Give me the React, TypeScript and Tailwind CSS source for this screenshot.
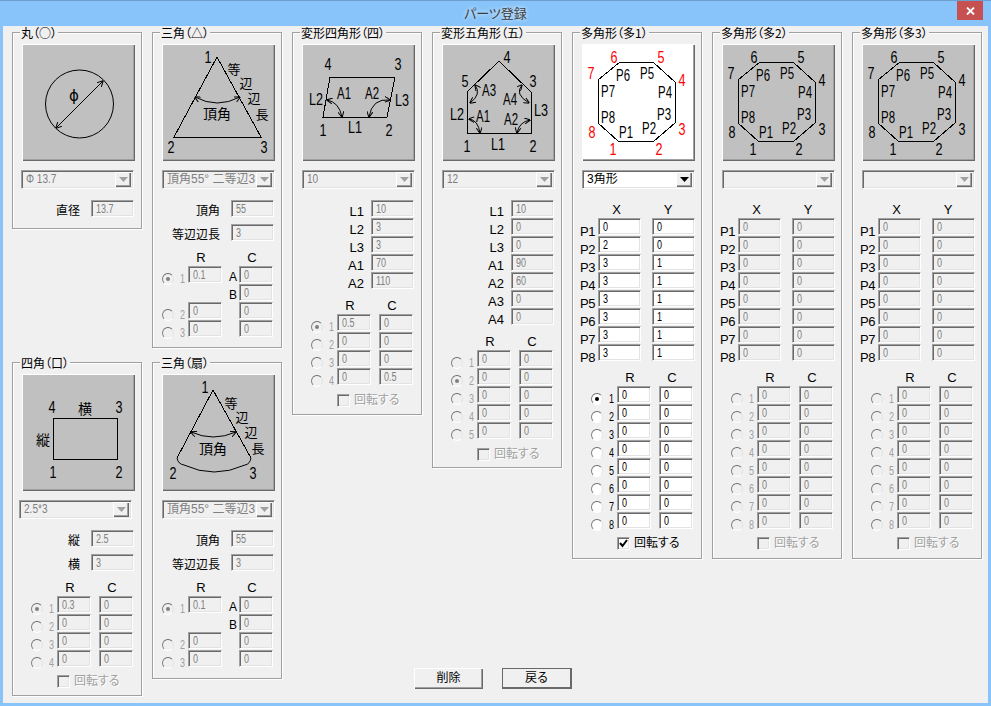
import React from 'react';

const raised = 'shadow-[inset_1px_1px_0_#ffffff,inset_-1px_-1px_0_#696969,inset_-2px_-2px_0_#a0a0a0]';
const sunken =
  'border border-t-[#a0a0a0] border-l-[#a0a0a0] border-r-white border-b-white shadow-[inset_1px_1px_0_#696969,inset_-1px_-1px_0_#e3e3e3]';

// legacy dialog font has very narrow digits, so latin text is squeezed
function Narrow({ children }: { children: React.ReactNode }) {
  return <span className="inline-block origin-left scale-x-[0.75] whitespace-nowrap">{children}</span>;
}

function Field({ v, on, small }: { v: string; on?: boolean; small?: boolean }) {
  return (
    <div
      className={`h-[17px] shrink-0 overflow-hidden pl-[4px] pt-[2px] text-[12px] leading-[13px] ${sunken} ${
        small ? 'w-[34px]' : 'w-[43px]'
      } ${on ? 'bg-white text-black' : 'bg-[#f0f0f0] text-[#808080]'}`}
    >
      <Narrow>{v}</Narrow>
    </div>
  );
}

function Group({ title, className, children }: { title: string; className: string; children: React.ReactNode }) {
  return (
    <div
      className={`relative w-[130px] border border-[#a0a0a0] shadow-[1px_1px_0_#ffffff,inset_1px_1px_0_#ffffff] ${className}`}
    >
      <div className="absolute left-[7px] top-[-7px] whitespace-nowrap bg-[#f0f0f0] px-[1px] text-[12px] leading-[13px] text-black [font-family:'Noto_Sans_CJK_JP',sans-serif]">
        {title}
      </div>
      {children}
    </div>
  );
}

function ImageButton({ white, children }: { white?: boolean; children: React.ReactNode }) {
  return (
    <div className={`ml-[9px] mt-[11px] h-[117px] w-[113px] ${raised} ${white ? 'bg-white' : 'bg-[#c0c0c0]'}`}>
      <svg width="113" height="117" viewBox="0 0 113 117" fill="none" stroke="#000" strokeWidth="1">
        <defs>
          <marker id="arr" viewBox="0 0 6 6" refX="5.5" refY="3" markerWidth="6" markerHeight="6" orient="auto-start-reverse" markerUnits="userSpaceOnUse">
            <path d="M0 0 L6 3 L0 6" fill="none" stroke="#000" strokeWidth="1" />
          </marker>
        </defs>
        {children}
      </svg>
    </div>
  );
}

function Num({ x, y, t, c = '#000' }: { x: number; y: number; t: string; c?: string }) {
  return (
    <text
      x={x}
      y={y}
      textAnchor="middle"
      dominantBaseline="central"
      fontFamily="'Liberation Sans', sans-serif"
      fontSize="16"
      fill={c}
      stroke="none"
      textLength={t.length * 7}
      lengthAdjust="spacingAndGlyphs"
    >
      {t}
    </text>
  );
}

function Kan({ x, y, t, size = 14 }: { x: number; y: number; t: string; size?: number }) {
  return (
    <text
      x={x}
      y={y}
      textAnchor="middle"
      dominantBaseline="central"
      fontFamily="'Noto Sans CJK JP', sans-serif"
      fontSize={size}
      fill="#000"
      stroke="none"
    >
      {t}
    </text>
  );
}

function Combo({ v, on, narrow, className }: { v?: string; on?: boolean; narrow?: boolean; className: string }) {
  return (
    <div
      className={`mt-[9px] flex h-[19px] w-[113px] items-center justify-between pl-[4px] pr-[2px] text-[12px] leading-[13px] ${sunken} ${className} ${
        on ? 'bg-white text-black' : 'bg-[#f0f0f0] text-[#808080]'
      }`}
    >
      {narrow ? (
        <span className="inline-block origin-left scale-x-[0.84] whitespace-nowrap">{v}</span>
      ) : (
        <span className="overflow-hidden whitespace-nowrap">{v}</span>
      )}
      <div className={`flex h-[15px] w-[16px] shrink-0 items-center justify-center bg-[#f0f0f0] ${raised}`}>
        <svg width="9" height="5" viewBox="0 0 9 5">
          <path d="M0 0 H9 L4.5 5 Z" fill={on ? '#000' : '#a0a0a0'} />
        </svg>
      </div>
    </div>
  );
}

function Param({ label, v, gap, on }: { label: string; v: string; gap?: boolean; on?: boolean }) {
  return (
    <div className={`flex h-[18px] items-start justify-end pr-[7px] ${gap ? 'mb-[6px]' : ''}`}>
      <span className={`mt-[3px] leading-[17px] text-black ${gap ? 'mr-[11px] text-[12px]' : 'mr-[7px] text-[13px]'}`}>
        {label}
      </span>
      <Field v={v} on={on} />
    </div>
  );
}

function Head({ tri }: { tri?: boolean }) {
  return (
    <div className={`mt-[7px] flex h-[17px] text-[13px] leading-[17px] text-black ${tri ? 'ml-[35px]' : 'ml-[44px]'}`}>
      <span className="w-[26px] text-center">R</span>
      <span className={`w-[26px] text-center ${tri ? 'ml-[25px]' : 'ml-[16px]'}`}>C</span>
    </div>
  );
}

function Radio({ checked, on }: { checked?: boolean; on?: boolean }) {
  return (
    <div
      className={`mt-[7px] flex h-[12px] w-[12px] shrink-0 items-center justify-center rounded-full border border-t-[#696969] border-l-[#808080] border-r-[#e3e3e3] border-b-white ${
        on ? 'bg-white' : 'bg-[#f0f0f0]'
      }`}
    >
      {checked && <div className={`h-[4px] w-[4px] rounded-full ${on ? 'bg-black' : 'bg-[#808080]'}`} />}
    </div>
  );
}

type RC = { r: string; c: string; n: string; abc?: string };

function RadioRows({ rows, sel, on, tri }: { rows: RC[]; sel: number; on?: boolean; tri?: boolean }) {
  return (
    <div>
      {rows.map((row, i) => (
        <div key={i} className={`flex h-[18px] items-start ${tri ? 'ml-[9px]' : 'ml-[18px]'}`}>
          {row.n ? <Radio checked={sel === i} on={on} /> : <div className="w-[12px] shrink-0" />}
          <span
            className={`mt-[7px] w-[14px] shrink-0 pl-[6px] text-[12px] leading-[13px] ${
              on ? 'text-black' : 'text-[#a0a0a0]'
            }`}
          >
            <Narrow>{row.n}</Narrow>
          </span>
          {row.r === '' ? <div className="w-[34px] shrink-0" /> : <Field v={row.r} on={on} small />}
          <span className={`mt-[4px] shrink-0 pr-[2px] text-right text-[12px] leading-[15px] text-black ${tri ? 'w-[17px]' : 'w-[8px]'}`}>
            {row.abc}
          </span>
          <Field v={row.c} on={on} small />
        </div>
      ))}
    </div>
  );
}

function Check({ on, className }: { on?: boolean; className: string }) {
  return (
    <div className={`ml-[44px] flex items-center ${className}`}>
      <div className={`flex h-[13px] w-[13px] shrink-0 items-center justify-center ${sunken} ${on ? 'bg-white' : 'bg-[#f0f0f0]'}`}>
        {on && (
          <svg width="9" height="9" viewBox="0 0 9 9">
            <path d="M1 4 L3.5 7 L8 1" fill="none" stroke="#000" strokeWidth="2" />
          </svg>
        )}
      </div>
      <span
        className={`ml-[4px] text-[12px] leading-[13px] ${on ? 'text-black' : 'text-[#a0a0a0] [text-shadow:1px_1px_0_#ffffff]'}`}
      >
        回転する
      </span>
    </div>
  );
}

function Octagon({ red }: { red?: boolean }) {
  const c = red ? '#ff0000' : '#000';
  return (
    <ImageButton white={red}>
      <path shapeRendering="crispEdges" d="M38 18 H71 L93 38 V79 L72 97 H36 L16 79 V36 Z" />
      <Num x={32} y={13} t="6" c={c} />
      <Num x={79} y={13} t="5" c={c} />
      <Num x={9} y={29} t="7" c={c} />
      <Num x={100} y={36} t="4" c={c} />
      <Num x={10} y={88} t="8" c={c} />
      <Num x={100} y={85} t="3" c={c} />
      <Num x={31} y={105} t="1" c={c} />
      <Num x={77} y={105} t="2" c={c} />
      <Num x={41} y={31} t="P6" />
      <Num x={65} y={29} t="P5" />
      <Num x={26} y={47} t="P7" />
      <Num x={83} y={48} t="P4" />
      <Num x={26} y={73} t="P8" />
      <Num x={82} y={70} t="P3" />
      <Num x={44} y={88} t="P1" />
      <Num x={67} y={84} t="P2" />
    </ImageButton>
  );
}

function PolyGroup({ title, on }: { title: string; on?: boolean }) {
  const xy = on
    ? [['0', '0'], ['2', '0'], ['3', '1'], ['3', '1'], ['3', '1'], ['3', '1'], ['3', '1'], ['3', '1']]
    : Array.from({ length: 8 }, () => ['0', '0']);
  const rows: RC[] = ['1', '2', '3', '4', '5', '6', '7', '8'].map((n) => ({ n, r: '0', c: '0' }));
  return (
    <Group title={title} className="h-[527px]">
      <Octagon red={on} />
      <Combo on={on} v={on ? '3角形' : ''} className="ml-[9px]" />
      <div className="ml-[25px] mt-[12px] flex h-[17px] text-[13px] leading-[17px] text-black">
        <span className="w-[37px] text-center">X</span>
        <span className="ml-[16px] w-[34px] text-center">Y</span>
      </div>
      {xy.map(([x, y], i) => (
        <div key={i} className="ml-[7px] flex h-[18px] items-start">
          <span className="mt-[5px] w-[18px] shrink-0 text-[13px] leading-[17px] tracking-[-0.5px] text-black">P{i + 1}</span>
          <Field v={x} on={on} />
          <div className="w-[11px] shrink-0" />
          <Field v={y} on={on} />
        </div>
      ))}
      <Head />
      <RadioRows rows={rows} sel={on ? 0 : -1} on={on} />
      <Check on={on} className="mt-[7px]" />
    </Group>
  );
}

const fanRows: RC[] = [
  { n: '1', r: '0.1', c: '0', abc: 'A' },
  { n: '', r: '', c: '0', abc: 'B' },
  { n: '2', r: '0', c: '0' },
  { n: '3', r: '0', c: '0' },
];

export default function App() {
  return (
    <div
      className="flex h-[706px] w-[991px] flex-col overflow-hidden bg-[#88c4f9] [font-family:'Liberation_Sans','Noto_Sans_CJK_JP',sans-serif] [font-feature-settings:'palt']"
    >
      {/* Title bar */}
      <div className="relative flex h-[26px] shrink-0 items-center justify-center border-t border-[#6a9fd0]">
        <span className="text-[13px] leading-[16px] text-[#3c3c3c] [text-shadow:0_0_4px_#ffffff]">パーツ登録</span>
        <div className="absolute right-[8px] top-0 flex h-[19px] w-[26px] items-center justify-center bg-[#c75050]">
          <svg width="9" height="8" viewBox="0 0 9 8">
            <path d="M1 0.5 L8 7.5 M8 0.5 L1 7.5" stroke="#fff" strokeWidth="1.8" />
          </svg>
        </div>
      </div>

      {/* Client area */}
      <div className="mx-[3px] mb-[3px] flex min-h-0 flex-1 gap-[10px] bg-[#f0f0f0] pl-[9px] pt-[6px]">
        {/* Column 1 */}
        <div className="flex w-[130px] flex-col">
          <Group title="丸（○）" className="h-[197px]">
            <ImageButton>
              <circle cx="57.5" cy="60" r="34" />
              <path shapeRendering="crispEdges" d="M34 84 L81 37" markerStart="url(#arr)" markerEnd="url(#arr)" />
              <text x="52" y="52" textAnchor="middle" dominantBaseline="central" fontFamily="'DejaVu Sans', sans-serif" fontSize="15" fill="#000" stroke="none">
                ϕ
              </text>
            </ImageButton>
            <Combo v="Φ 13.7" narrow className="ml-[8px]" />
            <div className="mt-[11px]">
              <Param label="直径" v="13.7" gap />
            </div>
          </Group>
          <div className="mt-[133px]">
            <Group title="四角（口）" className="h-[334px]">
              <ImageButton>
                <rect x="31.5" y="44.5" width="64" height="41" shapeRendering="crispEdges" strokeWidth="1" />
                <Num x={30} y={33} t="4" />
                <Num x={97} y={33} t="3" />
                <Num x={31} y={98} t="1" />
                <Num x={97} y={98} t="2" />
                <Kan x={63} y={34} t="横" />
                <Kan x={21} y={65} t="縦" />
              </ImageButton>
              <Combo v="2.5*3" narrow className="ml-[6px]" />
              <div className="mt-[11px]">
                <Param label="縦" v="2.5" gap />
                <Param label="横" v="3" gap />
              </div>
              <Head />
              <RadioRows
                sel={0}
                rows={[
                  { n: '1', r: '0.3', c: '0' },
                  { n: '2', r: '0', c: '0' },
                  { n: '3', r: '0', c: '0' },
                  { n: '4', r: '0', c: '0' },
                ]}
              />
              <Check className="mt-[7px]" />
            </Group>
          </div>
        </div>

        {/* Column 2 */}
        <div className="flex w-[130px] flex-col">
          <Group title="三角（△）" className="h-[316px]">
            <ImageButton>
              <path shapeRendering="crispEdges" d="M55 13 L12 93 H99 Z" />
              <path d="M33 53 Q55 65 78 53" markerStart="url(#arr)" markerEnd="url(#arr)" />
              <Num x={46} y={13} t="1" />
              <Num x={9} y={103} t="2" />
              <Num x={102} y={103} t="3" />
              <Kan x={72} y={24} t="等" size={13} />
              <Kan x={84} y={38} t="辺" size={13} />
              <Kan x={92} y={53} t="辺" size={13} />
              <Kan x={100} y={69} t="長" size={13} />
              <Kan x={55} y={69} t="頂角" />
            </ImageButton>
            <Combo v="頂角55° 二等辺3" className="ml-[9px]" />
            <div className="mt-[11px]">
              <Param label="頂角" v="55" gap />
              <Param label="等辺辺長" v="3" gap />
            </div>
            <Head tri />
            <RadioRows rows={fanRows} sel={0} tri />
          </Group>
          <div className="mt-[14px]">
            <Group title="三角（扇）" className="h-[317px]">
              <ImageButton>
                <path shapeRendering="crispEdges" d="M51 16 L15 84 M51 16 L89 84" />
                <path d="M15 84 Q16 90 22 91 Q52 105 83 91 Q88 90 89 84" />
                <path d="M29 58 Q51 68 74 58" markerStart="url(#arr)" markerEnd="url(#arr)" />
                <Num x={43} y={13} t="1" />
                <Num x={11} y={99} t="2" />
                <Num x={91} y={99} t="3" />
                <Kan x={69} y={28} t="等" size={13} />
                <Kan x={80} y={42} t="辺" size={13} />
                <Kan x={89} y={57} t="辺" size={13} />
                <Kan x={96} y={73} t="長" size={13} />
                <Kan x={51} y={74} t="頂角" />
              </ImageButton>
              <Combo v="頂角55° 二等辺3" className="ml-[9px]" />
              <div className="mt-[11px]">
                <Param label="頂角" v="55" gap />
                <Param label="等辺辺長" v="3" gap />
              </div>
              <Head tri />
              <RadioRows rows={fanRows} sel={0} tri />
            </Group>
          </div>
        </div>

        {/* Remaining columns and the buttons below them */}
        <div className="flex flex-1 flex-col justify-between pb-[14px]">
          <div className="flex items-start gap-[10px]">
            <Group title="変形四角形（四）" className="h-[383px]">
              <ImageButton>
                <path shapeRendering="crispEdges" d="M28 33 H93 L85 73 H21 Z" />
                <path d="M25 56 Q37 58 40 73" markerStart="url(#arr)" markerEnd="url(#arr)" />
                <path d="M67 73 Q70 54 88 56" markerStart="url(#arr)" markerEnd="url(#arr)" />
                <Num x={26} y={20} t="4" />
                <Num x={96} y={20} t="3" />
                <Num x={14} y={55} t="L2" />
                <Num x={42} y={49} t="A1" />
                <Num x={70} y={49} t="A2" />
                <Num x={100} y={56} t="L3" />
                <Num x={53} y={83} t="L1" />
                <Num x={21} y={86} t="1" />
                <Num x={87} y={86} t="2" />
              </ImageButton>
              <Combo v="10" narrow className="ml-[9px]" />
              <div className="mt-[11px]">
                <Param label="L1" v="10" />
                <Param label="L2" v="3" />
                <Param label="L3" v="3" />
                <Param label="A1" v="70" />
                <Param label="A2" v="110" />
              </div>
              <Head />
              <RadioRows
                sel={0}
                rows={[
                  { n: '1', r: '0.5', c: '0' },
                  { n: '2', r: '0', c: '0' },
                  { n: '3', r: '0', c: '0' },
                  { n: '4', r: '0', c: '0.5' },
                ]}
              />
              <Check className="mt-[8px]" />
            </Group>

            <Group title="変形五角形（五）" className="h-[436px]">
              <ImageButton>
                <path shapeRendering="crispEdges" d="M57 17 L89 48 V89 H25 V48 Z" />
                <path d="M28 59 Q40 50 33 41" markerStart="url(#arr)" markerEnd="url(#arr)" />
                <path d="M27 75 Q36 76 38 89" markerStart="url(#arr)" markerEnd="url(#arr)" />
                <path d="M75 89 Q77 78 88 76" markerStart="url(#arr)" markerEnd="url(#arr)" />
                <path d="M87 59 Q72 50 80 41" markerStart="url(#arr)" markerEnd="url(#arr)" />
                <Num x={65} y={13} t="4" />
                <Num x={23} y={37} t="5" />
                <Num x={91} y={37} t="3" />
                <Num x={47} y={46} t="A3" />
                <Num x={68} y={55} t="A4" />
                <Num x={15} y={70} t="L2" />
                <Num x={41} y={72} t="A1" />
                <Num x={69} y={75} t="A2" />
                <Num x={99} y={66} t="L3" />
                <Num x={56} y={100} t="L1" />
                <Num x={25} y={102} t="1" />
                <Num x={91} y={102} t="2" />
              </ImageButton>
              <Combo v="12" narrow className="ml-[9px]" />
              <div className="mt-[11px]">
                <Param label="L1" v="10" />
                <Param label="L2" v="0" />
                <Param label="L3" v="0" />
                <Param label="A1" v="90" />
                <Param label="A2" v="60" />
                <Param label="A3" v="0" />
                <Param label="A4" v="0" />
              </div>
              <Head />
              <RadioRows
                sel={1}
                rows={['1', '2', '3', '4', '5'].map((n) => ({ n, r: '0', c: '0' }))}
              />
              <Check className="mt-[8px]" />
            </Group>

            <PolyGroup title="多角形（多1）" on />
            <PolyGroup title="多角形（多2）" />
            <PolyGroup title="多角形（多3）" />
          </div>

          <div className="ml-[122px] flex gap-[19px]">
            <div className={`flex h-[21px] w-[69px] items-center justify-center bg-[#f0f0f0] text-[12px] leading-[13px] text-black ${raised}`}>
              削除
            </div>
            <div className="flex h-[21px] w-[70px] items-center justify-center border-2 border-[#696969] border-t border-l bg-[#f0f0f0] text-[12px] leading-[13px] text-black">
              戻る
            </div>
          </div>
        </div>
      </div>
    </div>
  );
}
